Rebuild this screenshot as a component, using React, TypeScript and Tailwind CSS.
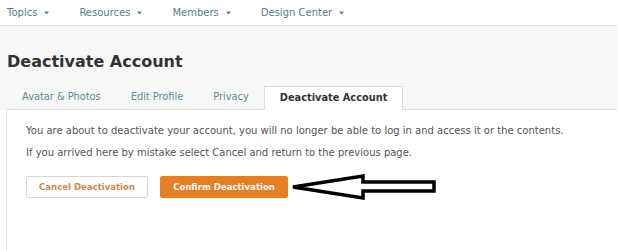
import React from "react";

const navItems = ["Topics", "Resources", "Members", "Design Center"];
const tabs = ["Avatar & Photos", "Edit Profile", "Privacy"];

function Caret() {
  return (
    <svg width="5" height="4" viewBox="0 0 5 4" className="ml-[7px]">
      <path d="M0 0.5 L5 0.5 L2.5 3.5 Z" fill="#4f8190" />
    </svg>
  );
}

export default function App() {
  return (
    <div className="w-[620px] h-[250px] overflow-hidden bg-white font-['DejaVu_Sans',sans-serif]">
      {/* top nav */}
      <div className="h-[25px] flex items-center gap-[30px] pl-[7px] text-[10px] text-[#4f8190]">
        {navItems.map((item) => (
          <div key={item} className="flex items-center">
            <span>{item}</span>
            <Caret />
          </div>
        ))}
      </div>

      {/* header band */}
      <div className="w-[617px] bg-[#f7f7f7] border-t border-[#e2e2e2]">
        <h1 className="pl-[7px] pt-[26px] text-[16px] leading-[20px] font-bold text-[#333]">
          Deactivate Account
        </h1>
        <div className="mt-[14px] ml-[7px] flex items-end border-b border-[#dcdcdc] text-[9.8px]">
          {tabs.map((t) => (
            <div key={t} className="px-[15px] h-[23px] flex items-center text-[#5a8b98]">
              {t}
            </div>
          ))}
          <div className="px-[15px] h-[24px] -mb-px flex items-center bg-white border border-b-0 border-[#dcdcdc] font-bold text-[#333]">
            Deactivate Account
          </div>
        </div>
      </div>

      {/* panel */}
      <div className="ml-[6px] h-[140px] border-l border-[#e4e4e4] pl-[19px] pt-[15px] text-[10px] text-[#555]">
        <p className="leading-[12px]">
          You are about to deactivate your account, you will no longer be able to log in and access it or the contents.
        </p>
        <p className="mt-[10px] leading-[12px]">
          If you arrived here by mistake select Cancel and return to the previous page.
        </p>
        <div className="mt-[13px] flex items-center">
          <button className="w-[122px] h-[22px] rounded-[2px] border border-[#d6d6d6] bg-white font-['DejaVu_Sans_Condensed','DejaVu_Sans',sans-serif] font-bold text-[9.5px] text-[#d08a48]">
            Cancel Deactivation
          </button>
          <button className="ml-[12px] w-[128px] h-[22px] rounded-[2px] bg-[#e67e22] font-['DejaVu_Sans_Condensed','DejaVu_Sans',sans-serif] font-bold text-[9.5px] text-white">
            Confirm Deactivation
          </button>
          <svg width="150" height="30" viewBox="0 0 150 30" className="ml-[1px]">
            <path
              d="M4 15 L74 4 L74 10 L145 10 L145 19 L74 19 L74 26 Z"
              fill="white"
              stroke="black"
              strokeWidth="3.5"
              strokeLinejoin="miter"
            />
          </svg>
        </div>
      </div>
    </div>
  );
}
